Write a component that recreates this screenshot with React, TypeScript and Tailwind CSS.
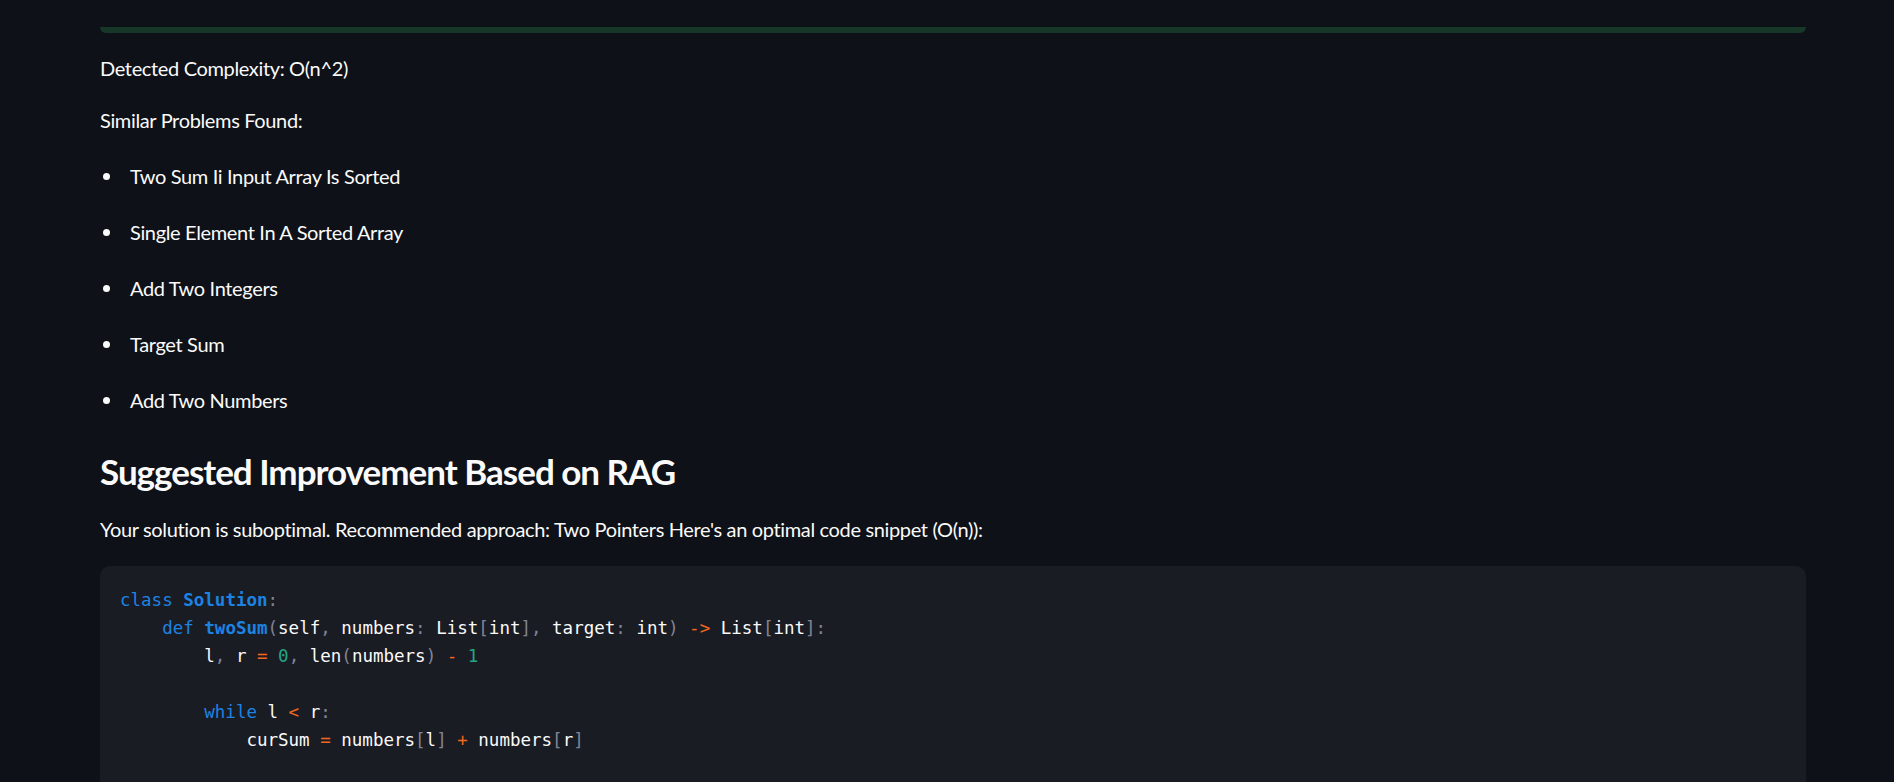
import React from "react";

const K = ({ children }: { children: React.ReactNode }) => (
  <span className="text-[#1c83e1]">{children}</span>
);
const F = ({ children }: { children: React.ReactNode }) => (
  <span className="font-bold text-[#1c83e1]">{children}</span>
);
const P = ({ children }: { children: React.ReactNode }) => (
  <span className="text-[#808495]">{children}</span>
);
const O = ({ children }: { children: React.ReactNode }) => (
  <span className="text-[#f2661f]">{children}</span>
);
const N = ({ children }: { children: React.ReactNode }) => (
  <span className="text-[#23a684]">{children}</span>
);

const items = [
  "Two Sum Ii Input Array Is Sorted",
  "Single Element In A Sorted Array",
  "Add Two Integers",
  "Target Sum",
  "Add Two Numbers",
];

export default function App() {
  return (
    <div
      className="h-[782px] w-full overflow-hidden bg-[#0e1117] text-[#fafafa]"
      style={{ fontFamily: "Lato, 'Liberation Sans', sans-serif" }}
    >
      <div className="ml-[100px] w-[1706px] pt-[27px]">
        <div className="h-[6px] rounded-b-[8px] bg-[#173828]" />

        <p className="mt-[19px] text-[20px] leading-[32px] tracking-[-0.35px]">Detected Complexity: O(n^2)</p>
        <p className="mt-[20px] text-[20px] leading-[32px] tracking-[-0.35px]">Similar Problems Found:</p>

        <ul className="mt-[24px] flex flex-col gap-[24px]">
          {items.map((t) => (
            <li key={t} className="flex items-center text-[20px] leading-[32px] tracking-[-0.35px]">
              <span className="ml-[3px] mt-[1px] h-[7px] w-[7px] shrink-0 rounded-full bg-[#fafafa]" />
              <span className="ml-[20px]">{t}</span>
            </li>
          ))}
        </ul>

        <h3 className="mt-[34px] text-[35px] font-bold leading-[42px] tracking-[-1px]">
          Suggested Improvement Based on RAG
        </h3>

        <p className="mt-[21px] text-[20px] leading-[32px] tracking-[-0.35px]">
          Your solution is suboptimal. Recommended approach: Two Pointers Here's an optimal code snippet (O(n)):
        </p>

        <div className="mt-[21px] h-[260px] rounded-[10px] bg-[#1a1c24] pl-[20px] pt-[20px]">
          <pre
            className="text-[17.5px] leading-[28px] text-[#fafafa]"
            style={{ fontFamily: "'DejaVu Sans Mono', 'Liberation Mono', monospace" }}
          >
            <K>class</K> <F>Solution</F><P>:</P>
            {"\n    "}
            <K>def</K> <F>twoSum</F><P>(</P>self<P>,</P> numbers<P>:</P> List<P>[</P>int<P>],</P> target<P>:</P> int<P>)</P> <O>-&gt;</O> List<P>[</P>int<P>]:</P>
            {"\n        "}
            l<P>,</P> r <O>=</O> <N>0</N><P>,</P> len<P>(</P>numbers<P>)</P> <O>-</O> <N>1</N>
            {"\n\n        "}
            <K>while</K> l <O>&lt;</O> r<P>:</P>
            {"\n            "}
            curSum <O>=</O> numbers<P>[</P>l<P>]</P> <O>+</O> numbers<P>[</P>r<P>]</P>
          </pre>
        </div>
      </div>
    </div>
  );
}
